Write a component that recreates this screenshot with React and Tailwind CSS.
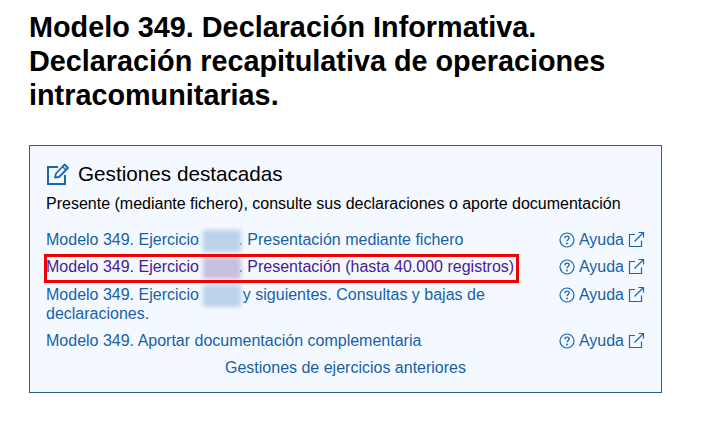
function EditIcon() {
    return (
        <svg width="24" height="24" viewBox="0 0 24 24" fill="none" stroke="#1a66ad" strokeWidth="2" className="shrink-0">
            <path d="M12 5H2V22H19V13" />
            <path d="M9 15.5L10 11.5L18.5 2.5L22 6L13 15L9 15.5Z" strokeLinejoin="round" strokeWidth="1.8" />
            <path d="M16.5 4.5L20 8" strokeWidth="1.5" />
        </svg>
    );
}

function HelpIcon() {
    return (
        <svg width="16" height="16" viewBox="0 0 16 16" fill="none" className="shrink-0">
            <circle cx="8" cy="8" r="7" stroke="#1a66ad" strokeWidth="1.2" />
            <path d="M5.9 6.2C5.9 5 6.8 4.2 8 4.2C9.2 4.2 10.1 5 10.1 6C10.1 7.4 8 7.5 8 9.3" stroke="#1a66ad" strokeWidth="1.3" />
            <circle cx="8" cy="11.5" r="0.9" fill="#1a66ad" />
        </svg>
    );
}

function LinkOutIcon() {
    return (
        <svg width="17" height="17" viewBox="0 0 17 17" fill="none" stroke="#1a66ad" strokeWidth="1.2" className="shrink-0">
            <path d="M7 3.5H1.5V15.5H13.5V9.5" />
            <path d="M6.5 10.5L15.5 1.5" />
            <path d="M10.5 1.5H15.5V6.5" />
        </svg>
    );
}

function Year({ visited }) {
    return (
        <span className={`inline-block w-[38px] h-[22px] -my-[4px] -mr-[3px] align-middle blur-[2px] ${visited ? 'bg-[#c9bfe0]' : 'bg-[#bbd2e9]'}`}></span>
    );
}

function Ayuda() {
    return (
        <span className="flex items-center gap-[4px] shrink-0 text-[#1a5fa8]">
            <HelpIcon />
            <span>Ayuda</span>
            <LinkOutIcon />
        </span>
    );
}

function Row({ children, visited, className = '' }) {
    return (
        <div className={`flex justify-between items-start leading-[19px] ${className}`}>
            <a className={`block w-[480px] ${visited ? 'text-[#4b1a92]' : 'text-[#1a5fa8]'}`}>{children}</a>
            <Ayuda />
        </div>
    );
}

export default function App() {
    return (
        <div className="w-[702px] h-[421px] bg-white overflow-hidden pl-[29px] pt-[10px] font-['Liberation_Sans',Arial,sans-serif]">
            <h1 className="text-[28.8px] leading-[34px] font-bold text-black w-[620px]">
                Modelo 349. Declaración Informativa. Declaración recapitulativa de operaciones intracomunitarias.
            </h1>
            <div className="relative mt-[33px] w-[633px] h-[248px] border border-[#2a6099] bg-[#f3f9ff] pl-[16px] pr-[16px] pt-[15px] text-[16px]">
                <div className="flex items-center gap-[8px] h-[26px] text-[20.7px] text-black">
                    <EditIcon />
                    <span>Gestiones destacadas</span>
                </div>
                <p className="mt-[8px] leading-[18px] text-black">
                    Presente (mediante fichero), consulte sus declaraciones o aporte documentación
                </p>
                <Row className="mt-[17px]">
                    Modelo 349. Ejercicio <Year />. Presentación mediante fichero
                </Row>
                <Row visited className="mt-[8px]">
                    Modelo 349. Ejercicio <Year visited />. Presentación (hasta 40.000 registros)
                </Row>
                <Row className="mt-[9px]">
                    Modelo 349. Ejercicio <Year /> y siguientes. Consultas y bajas de declaraciones.
                </Row>
                <Row className="mt-[8px]">Modelo 349. Aportar documentación complementaria</Row>
                <div className="mt-[8px] text-center leading-[19px] text-[#1a5fa8]">Gestiones de ejercicios anteriores</div>
                <div className="absolute left-[14px] top-[108px] w-[475px] h-[29px] border-[3px] border-[#f00000]"></div>
            </div>
        </div>
    );
}
